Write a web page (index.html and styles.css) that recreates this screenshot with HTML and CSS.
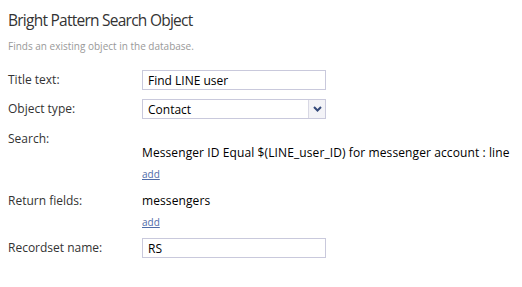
FILE: index.html
```html
<!DOCTYPE html>
<html lang="en">
  <head>
    <meta charset="UTF-8" />
    <title>Bright Pattern Search Object</title>
    <link rel="stylesheet" href="styles.css">
  </head>
  <body>
    <h1 class="title">Bright Pattern Search Object</h1>
    <p class="subtitle">Finds an existing object in the database.</p>

    <div class="form">
      <div class="row">
        <label class="label">Title text:</label>
        <input class="field" type="text" value="Find LINE user" />
      </div>
      <div class="row">
        <label class="label">Object type:</label>
        <div class="select">
          <span class="select-value">Contact</span>
          <span class="select-btn">
            <svg width="9" height="6" viewBox="0 0 9 6">
              <path d="M1 1 L4.5 4.5 L8 1" fill="none" stroke="#34497a" stroke-width="2" />
            </svg>
          </span>
        </div>
      </div>
      <div class="row row-list row-search">
        <span class="label">Search:</span>
        <div class="value-block">
          <div class="value">Messenger ID Equal $(LINE_user_ID) for messenger account : line</div>
          <a class="add" href="#">add</a>
        </div>
      </div>
      <div class="row row-list row-return">
        <span class="label">Return fields:</span>
        <div class="value-block">
          <div class="value">messengers</div>
          <a class="add" href="#">add</a>
        </div>
      </div>
      <div class="row">
        <label class="label">Recordset name:</label>
        <input class="field" type="text" value="RS" />
      </div>
    </div>
  </body>
</html>
```

FILE: styles.css
```css
body {
  margin: 0;
  padding: 0 8px;
  font-family: "Open Sans", Arial, sans-serif;
  font-size: 12px;
  color: #333;
  background: white;
}

.title {
  margin: 10px 0 0;
  font-size: 15.5px;
  font-weight: normal;
  letter-spacing: -0.75px;
  line-height: 20px;
  color: #333;
}

.subtitle {
  margin: 9px 0 0;
  font-size: 10px;
  line-height: 14px;
  color: #999;
}

.form {
  margin-top: 17px;
}

.row {
  display: grid;
  grid-template-columns: 134px 184px;
  align-items: center;
  margin-bottom: 9px;
}

.label {
  color: #333;
  line-height: 18px;
}

.field {
  box-sizing: border-box;
  height: 20px;
  margin: 0;
  padding: 0 5px;
  border: 1px solid #c9c9dc;
  font-family: inherit;
  font-size: 12px;
  color: #000;
  outline: none;
}

.select {
  box-sizing: border-box;
  height: 20px;
  display: flex;
  align-items: center;
  border: 1px solid #c9c9dc;
  color: #000;
}

.select-value {
  flex: 1;
  padding-left: 5px;
}

.select-btn {
  width: 16px;
  height: 18px;
  display: flex;
  align-items: center;
  justify-content: center;
  border-left: 1px solid #d8d8e4;
  background: #f3f3f7;
}

.row-list {
  grid-template-columns: 134px auto;
  align-items: start;
}

.row-search {
  margin-top: 11px;
  margin-bottom: 10px;
}

.row-search .value-block {
  padding-top: 14px;
}

.row-return {
  margin-bottom: 8px;
}

.value {
  white-space: nowrap;
  color: #000;
  line-height: 18px;
  letter-spacing: 0.1px;
}

.add {
  display: inline-block;
  margin-top: 5px;
  font-size: 10px;
  line-height: 14px;
  color: #4f6ba8;
}
```
